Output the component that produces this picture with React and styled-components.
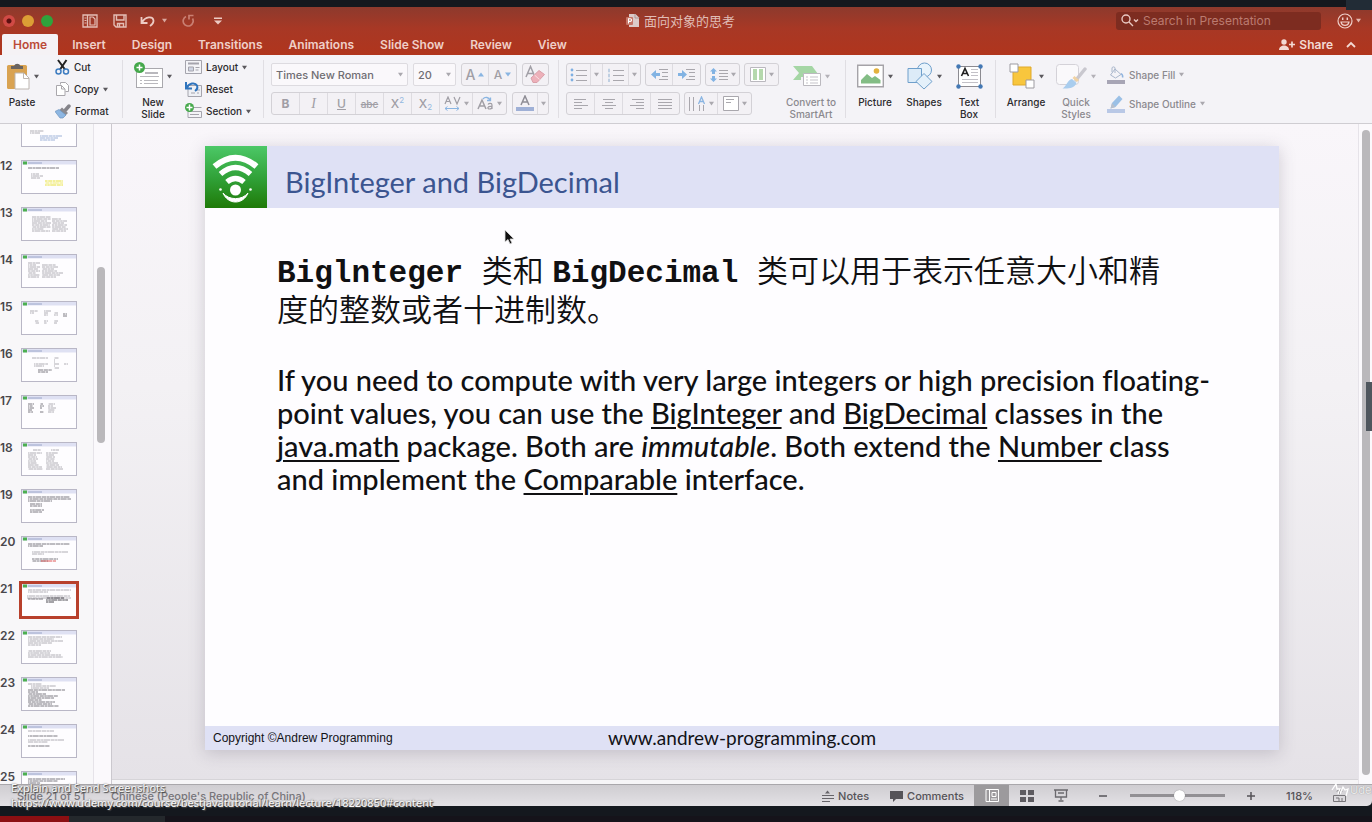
import React from "react";
import styled, { createGlobalStyle } from "styled-components";

const UI = `Inter, "Noto Sans CJK SC", "Liberation Sans", sans-serif`;
const SLIDE = `Lato, "Noto Sans CJK SC", sans-serif`;

const Global = createGlobalStyle`
  * { box-sizing: border-box; }
  html, body, #root { height: 100%; }
  body { margin: 0; background: #14181e; font-family: ${UI}; overflow: hidden; }
  button, input, select { font-family: inherit; margin: 0; }
  svg { display: block; flex: none; }
`;

/* ---------- frame ---------- */
const Screen = styled.div`
  position: relative;
  display: grid;
  grid-template-rows: 7px minmax(0, 1fr) 16px;
  height: 100%;
`;
const AppWindow = styled.div`
  grid-row: 2;
  display: flex;
  flex-direction: column;
  min-height: 0;
  border-radius: 0 0 5px 0;
  overflow: hidden;
`;
const PlayerTrack = styled.div`
  grid-row: 3;
  align-self: end;
  display: flex;
  height: 6px;
  background: #15131a;
`;
const Played = styled.div`
  width: 5%;
  background: #8c0f12;
`;
const Buffered = styled.div`
  width: 7%;
  background: #24282c;
`;

/* ---------- header ---------- */
const Header = styled.header`
  flex: none;
  background: linear-gradient(#8d3a2d, #a83825 45%, #b0351d);
  color: #f3d9d3;
`;
const TitleBar = styled.div`
  display: grid;
  grid-template-columns: 1fr auto 1fr;
  align-items: center;
  height: 27px;
  padding-right: 11px;
`;
const QuickAccess = styled.div`
  display: flex;
  align-items: center;
  padding-left: 3px;
`;
const Light = styled.button`
  width: 12px;
  height: 12px;
  margin-right: 7px;
  padding: 0;
  border: 0;
  border-radius: 50%;
  background: ${(p) => (p.$dot ? `radial-gradient(circle, #5c0f10 2px, ${p.$color} 3px)` : p.$color)};
`;
const QuickIcons = styled.div`
  display: flex;
  align-items: center;
  margin-left: 15px;
`;
const Plain = styled.button`
  display: flex;
  align-items: center;
  justify-content: center;
  gap: ${(p) => p.$gap || 0}px;
  width: ${(p) => (p.$w ? `${p.$w}px` : "auto")};
  padding: 0;
  border: 0;
  background: none;
  color: inherit;
  font-size: 12px;
  font-weight: ${(p) => p.$weight || 400};
`;
const DocTitle = styled.h1`
  display: flex;
  align-items: center;
  gap: 4px;
  margin: 0;
  font-size: 13px;
  line-height: 16px;
  font-weight: 400;
  color: #e0bdb6;
`;
const TitleRight = styled.div`
  display: flex;
  align-items: center;
  justify-content: flex-end;
  gap: 16px;
`;
const Search = styled.label`
  display: flex;
  align-items: center;
  gap: 4px;
  width: 205px;
  height: 18px;
  padding-left: 5px;
  border-radius: 3px;
  background: #7d2c20;
`;
const SearchInput = styled.input`
  flex: 1;
  min-width: 0;
  padding: 0;
  border: 0;
  outline: 0;
  background: none;
  color: #c78c81;
  font-size: 12px;
  &::placeholder { color: #bb7b70; opacity: 1; }
`;
const TabRow = styled.nav`
  display: flex;
  align-items: stretch;
  height: 21px;
  padding-left: 2px;
`;
const Tab = styled.button`
  padding: 0 ${(p) => (p.$active ? 11 : 13)}px;
  margin-right: ${(p) => (p.$active ? 1 : 0)}px;
  border: 0;
  border-radius: 2px 2px 0 0;
  background: ${(p) => (p.$active ? "#f5f2f5" : "none")};
  color: ${(p) => (p.$active ? "#bb4a37" : "#f0cfc8")};
  font-size: 12px;
  line-height: 19px;
  font-weight: 600;
`;
const TabEnd = styled.div`
  display: flex;
  gap: 13px;
  margin-left: auto;
  padding-right: 16px;
  color: #f3d9d3;
`;

/* ---------- ribbon ---------- */
const Ribbon = styled.div`
  flex: none;
  display: flex;
  height: 69px;
  background: #f4f3f7;
  border-bottom: 1px solid #cfcdd2;
`;
const Group = styled.section`
  position: relative;
  display: flex;
  flex: none;
  width: ${(p) => (p.$w ? `${p.$w}px` : "auto")};
  padding-left: ${(p) => p.$pad || 0}px;
  &:not(:last-child)::after {
    content: "";
    position: absolute;
    right: 0;
    top: 5px;
    bottom: 5px;
    width: 1px;
    background: #e0dee3;
  }
`;
const Big = styled.button`
  display: flex;
  flex-direction: column;
  align-items: center;
  flex: none;
  width: ${(p) => p.$w}px;
  padding: 6px 0 0;
  border: 0;
  background: none;
  color: ${(p) => (p.$off ? "#8b898e" : "#2b2a2d")};
  font-size: 10px;
  line-height: 12px;
  font-weight: 500;
`;
const BigTop = styled.span`
  display: flex;
  align-items: center;
  gap: 4px;
  height: 30px;
  margin-bottom: 5px;
`;
const SmallList = styled.div`
  display: flex;
  flex-direction: column;
  padding: 1px 0 0 ${(p) => p.$pad}px;
`;
const Small = styled.button`
  display: flex;
  align-items: center;
  gap: 4px;
  flex: none;
  height: ${(p) => (p.$off ? 23 : 22)}px;
  padding: 0;
  border: 0;
  background: none;
  color: ${(p) => (p.$off ? "#8b898e" : "#2b2a2d")};
  font-size: 10px;
  line-height: 12px;
  font-weight: 500;
  white-space: nowrap;
`;
const Rows = styled.div`
  display: flex;
  flex-direction: column;
  gap: 6px;
  padding: 8px 0 0 ${(p) => p.$pad || 0}px;
`;
const Row = styled.div`
  display: flex;
  gap: ${(p) => p.$gap || 5}px;
`;
const Seg = styled.div`
  display: flex;
  height: 23px;
  border: 1px solid #d3d1d6;
  border-radius: 3px;
  background: #f3f1f5;
`;
const SegBtn = styled.button`
  display: flex;
  align-items: center;
  justify-content: center;
  gap: 3px;
  width: ${(p) => p.$w || 28}px;
  padding: 0;
  border: 0;
  border-right: 1px solid #dddbe0;
  background: none;
  color: #a09ea5;
  font-size: 12px;
  line-height: 16px;
  &:last-child { border-right: 0; }
`;
const Glyph = styled.span`
  font-family: ${(p) => (p.$serif ? `"Liberation Serif", serif` : "inherit")};
  font-size: ${(p) => p.$size || 12}px;
  font-weight: ${(p) => p.$weight || 500};
  font-style: ${(p) => (p.$italic ? "italic" : "normal")};
  text-decoration: ${(p) => p.$deco || "none"};
`;
const Script = styled.span`
  font-size: 8px;
  line-height: 8px;
  color: #94b8e0;
  align-self: ${(p) => p.$pos};
  padding: 3px 0;
  margin-left: -3px;
`;
const Field = styled.label`
  display: flex;
  align-items: center;
  width: ${(p) => p.$w}px;
  height: 23px;
  padding-right: 4px;
  border: 1px solid #dddbe0;
  border-radius: 2px;
  background: #faf8fb;
`;
const Picker = styled.select`
  appearance: none;
  flex: 1;
  min-width: 0;
  height: 21px;
  padding: 0 0 0 4px;
  border: 0;
  background: none;
  color: #6f6d73;
  font-size: 11px;
  font-weight: 500;
`;

/* ---------- workspace ---------- */
const Work = styled.div`
  flex: 1;
  display: flex;
  min-height: 0;
  border-bottom: 1px solid #a9a7ab;
`;
const Sidebar = styled.aside`
  flex: none;
  display: flex;
  width: 112px;
  background: #f8f7f9;
  border-right: 1px solid #cbc8ce;
  overflow: hidden;
`;
const ThumbList = styled.ol`
  flex: 1;
  display: flex;
  flex-direction: column;
  gap: 13px;
  margin: -11px 0 0;
  padding: 0;
  list-style: none;
`;
const ThumbItem = styled.li`
  display: flex;
  flex: none;
  height: 34px;
  color: #49474c;
  font-size: 12px;
  line-height: 12px;
  font-weight: 600;
`;
const ThumbNo = styled.span`
  width: 21px;
`;
const Thumb = styled.button`
  width: 56px;
  height: 34px;
  padding: 0;
  border: 1px solid #b9b7c6;
  background: #fefdff;
  outline: ${(p) => (p.$on ? "3px solid #b8402c" : "0")};
  outline-offset: -1px;
  overflow: hidden;
`;
const ScrollTrack = styled.div`
  flex: none;
  width: ${(p) => p.$w}px;
  padding: ${(p) => p.$top} 3px ${(p) => p.$bottom} 3px;
  border-left: 1px solid #e6e3e9;
  background: #fbf9fc;
`;
const ScrollThumb = styled.div`
  width: 8px;
  height: ${(p) => p.$h};
  border-radius: 4px;
  background: #bab8bb;
`;
const Canvas = styled.main`
  flex: 1;
  display: flex;
  min-width: 0;
  padding: 22px 79px 30px 93px;
  background: linear-gradient(#f9f6fa, #f3f1f4 40%, #e5e2e7);
  border-bottom: 4px solid #f6f5f7;
  box-shadow: inset 0 -1px #d6d4d8;
`;
const Slide = styled.article`
  position: relative;
  flex: 1;
  display: flex;
  flex-direction: column;
  min-width: 0;
  background: #fefdff;
  box-shadow: 0 3px 16px rgba(70, 60, 80, 0.22);
  font-family: ${SLIDE};
  font-variant-ligatures: none;
`;
const SlideHead = styled.div`
  display: flex;
  align-items: center;
  gap: 18px;
  height: 62px;
  background: #dfe1f5;
`;
const SlideTitle = styled.h2`
  margin: 0;
  padding-top: 10px;
  color: #3b5590;
  font-size: 29px;
  line-height: 36px;
  font-weight: 400;
  white-space: nowrap;
`;
const SlideBody = styled.div`
  flex: 1;
  padding: 44px 0 0 72px;
  color: #101012;
  white-space: nowrap;
`;
const Chinese = styled.p`
  margin: 0 0 33px;
  font-family: "Liberation Sans", "Noto Sans CJK SC", sans-serif;
  font-size: 31px;
  line-height: 39px;
  font-weight: 350;
`;
const Code = styled.b`
  font-family: "Liberation Mono", monospace;
  line-height: 1;
  font-weight: 700;
  white-space: pre;
`;
const English = styled.p`
  margin: 0;
  font-size: 29px;
  font-weight: 500;
  line-height: 33px;
  u { text-decoration-thickness: 2px; text-underline-offset: 3px; }
`;
const SlideFoot = styled.footer`
  display: grid;
  grid-template-columns: 395px 1fr;
  align-items: center;
  height: 24px;
  padding-left: 8px;
  background: #dfe1f5;
  color: #121217;
`;
const Copyright = styled.span`
  font-family: "Liberation Sans", sans-serif;
  font-size: 12px;
`;
const Site = styled.span`
  font-size: 19px;
  line-height: 22px;
`;
const Cursor = styled.svg`
  position: absolute;
  left: 299px;
  top: 83px;
`;

/* ---------- status bar ---------- */
const Status = styled.footer`
  flex: none;
  display: flex;
  align-items: center;
  height: 21px;
  padding-left: 17px;
  background: linear-gradient(#cfcdd1, #e3e1e5);
  color: #555358;
  font-size: 11px;
  font-weight: 500;
`;
const StatusText = styled.span`
  width: ${(p) => (p.$w ? `${p.$w}px` : "auto")};
  white-space: nowrap;
  color: #77757a;
`;
const StatusRight = styled.div`
  display: flex;
  align-items: center;
  height: 100%;
  margin-left: auto;
  padding-right: 26px;
`;
const StatusBtn = styled.button`
  display: flex;
  align-items: center;
  justify-content: ${(p) => (p.$w ? "center" : "flex-start")};
  gap: 4px;
  width: ${(p) => (p.$w ? `${p.$w}px` : "auto")};
  height: 100%;
  margin-right: ${(p) => p.$after || 0}px;
  padding: 0;
  border: 0;
  background: ${(p) => (p.$on ? "#9c9a9d" : "none")};
  color: inherit;
  font-size: 11px;
  font-weight: 500;
`;
const Zoom = styled.input`
  appearance: none;
  width: 95px;
  height: 12px;
  margin: 0 20px 0 18px;
  background: linear-gradient(#929094, #929094) center / 100% 3px no-repeat;
  &::-webkit-slider-thumb {
    appearance: none;
    width: 11px;
    height: 11px;
    border-radius: 50%;
    background: #fff;
    box-shadow: 0 0 1px #777;
  }
`;

/* ---------- overlays ---------- */
const Hint = styled.div`
  position: absolute;
  left: 11px;
  bottom: 12px;
  color: #f8f8f8;
  font-family: "Noto Sans", sans-serif;
  font-size: 11px;
  line-height: 15px;
  text-shadow: 1px 1px 1px #444, 0 0 2px #666;
  white-space: nowrap;
`;
const HintLink = styled.a`
  display: block;
  color: inherit;
  text-decoration: none;
`;
const SideHandle = styled.div`
  position: absolute;
  right: 0;
  top: 382px;
  width: 6px;
  height: 49px;
  background: #4f565d;
`;
const TopHandle = styled.div`
  position: absolute;
  right: 0;
  top: 0;
  width: 26px;
  height: 10px;
  background: #222c36;
`;
const Watermark = styled.div`
  position: absolute;
  right: 0;
  bottom: 24px;
  display: flex;
  align-items: center;
  width: 42px;
  overflow: hidden;
  color: rgba(250, 250, 250, 0.85);
  font-size: 11px;
  line-height: 16px;
  text-shadow: 0 0 1px #888;
`;

/* ---------- drawings ---------- */
const Caret = ({ c = "#5a585d", s = 5 }) => (
  <svg width={s} height={s} viewBox="0 0 6 6"><path d="M0 1h6L3 5.5z" fill={c} /></svg>
);
const Svg = ({ w, h, children, ...r }) => (
  <svg width={w} height={h} viewBox={`0 0 ${w} ${h}`} fill="none" {...r}>{children}</svg>
);
const SidebarIcon = () => (
  <Svg w={16} h={14} stroke="#e3bdb5"><path d="M1 1h14v12H1zM5.500 1v12" strokeWidth="1.300" /><path d="M2.500 4h2M2.500 6.500h2M2.500 9h2" /><path d="M8 3h3l2 2v6H8z" strokeWidth="1.200" /></Svg>
);
const SaveIcon = () => (
  <Svg w={14} h={14} stroke="#e3bdb5" strokeWidth="1.400"><path d="M1 1h12v12H3l-2-2z" /><path d="M3.500 1v5h7.500V1" /><path d="M4.500 13V9.500h6V13M6.500 10v3" /></Svg>
);
const UndoIcon = () => (
  <Svg w={15} h={12} stroke="#edcbc4" strokeWidth="1.800"><path d="M1.500 2v6h6M2 7.500C5.500 1 13 1 13.500 5.500c.2 2-1.500 4-3.500 5.500" /></Svg>
);
const RedoIcon = () => (
  <Svg w={13} h={13} stroke="#c97f72" strokeWidth="1.700"><path d="M4 2.500A5 5 0 1 0 10.500 4.500M7 5.500V1.500h4.500" /></Svg>
);
const CustomIcon = () => (
  <Svg w={8} h={8}><path d="M0 .5h8v1.400H0zM0 3.500h8L4 7.500z" fill="#edcbc4" /></Svg>
);
const DocIcon = () => (
  <Svg w={14} h={15}><path d="M3 1h6.500L13 4.500V14H3z" fill="#dccbc9" /><path d="M9 1v4h4" stroke="#a99" /><rect y="4" width="7" height="8" rx="1" fill="#c57466" /><path d="M2.500 10.500V5.700h1.700a1.300 1.300 0 0 1 0 2.700H2.500" stroke="#fff" strokeWidth="1.100" /></Svg>
);
const SearchIcon = () => (
  <Svg w={18} h={13} stroke="#e8c8c2" strokeWidth="1.400"><circle cx="5" cy="5" r="4" /><path d="M8 8l4 4M13 5.500l2 2 2-2" /></Svg>
);
const SmileIcon = () => (
  <Svg w={16} h={16} stroke="#efcfc9" strokeWidth="1.200"><circle cx="8" cy="8" r="7" /><path d="M4 9c1 4.500 7 4.500 8 0z" /><path d="M5.700 4.500v2.500M10.300 4.500v2.500" strokeWidth="1.500" /></Svg>
);
const ShareIcon = () => (
  <Svg w={16} h={12}><circle cx="5" cy="3" r="2.700" fill="#f3d9d3" /><path d="M0 11c0-6 10-6 10 0z" fill="#f3d9d3" /><path d="M13 2.500v6M10 5.500h6" stroke="#f3d9d3" strokeWidth="1.700" /></Svg>
);
const PasteIcon = () => (
  <Svg w={24} h={28}><rect x="1" y="3" width="20" height="24" rx="1.500" fill="#d9a352" /><path d="M5 7V4h3a3.500 3.500 0 0 1 6.500 0H17v3z" fill="#6a6461" /><path d="M9 11h9l5 5v11H9z" fill="#fff" stroke="#bdb6b0" /><path d="M17.500 11v5.500H23" stroke="#bdb6b0" /></Svg>
);
const CutIcon = () => (
  <Svg w={15} h={16}><path d="M3 1l7 9.500M11.500 1L5 10.500" stroke="#222" strokeWidth="2" /><circle cx="3.500" cy="12.500" r="2.500" stroke="#3d7cc0" strokeWidth="1.500" /><circle cx="11" cy="12.500" r="2.500" stroke="#3d7cc0" strokeWidth="1.500" /></Svg>
);
const CopyIcon = () => (
  <Svg w={15} h={16} stroke="#a9a7ac"><path d="M5.500 3.500V1.500h5l3 3v6h-3" fill="#fff" /><path d="M1.500 4.500h5l3.500 3.500v6.500H1.500z" fill="#fff" /><path d="M6.500 4.500V8H10" /></Svg>
);
const FormatIcon = () => (
  <Svg w={16} h={15}><path d="M14 2L10.500 6" stroke="#85848a" strokeWidth="3.500" strokeLinecap="round" /><path d="M7 3.500l6 5.500-2.500 2.500-6.500-5z" fill="#8b8a90" /><path d="M4 5.500L0 7.500l5 6.500h3l3-3z" fill="#8db6e2" stroke="#6d93bd" strokeWidth=".7" /></Svg>
);
const Plus = ({ r = 5.5 }) => (
  <g><circle cx={r} cy={r} r={r} fill="#45a84b" /><path d={`M${r} ${r - 3}v6M${r - 3} ${r}h6`} stroke="#fff" strokeWidth="1.500" /></g>
);
const NewSlideIcon = () => (
  <Svg w={29} h={28}><rect x="2.500" y="6.500" width="26" height="19" fill="#fff" stroke="#a9a8ad" /><path d="M11 11h13" stroke="#b9b8bd" strokeWidth="2" /><path d="M6 14.500h19M6 18.500h2M10 18.500h14M6 21.500h2M10 21.500h14" stroke="#b9b8bd" /><Plus /></Svg>
);
const LayoutIcon = () => (
  <Svg w={17} h={14} stroke="#a5a4ad"><path d="M.5.5h16v13H.5z" fill="#f4f4f8" /><path d="M3 3.500h11" strokeWidth="2" /><path d="M3.500 7h5v4h-5z" fill="#cfd4e3" /><path d="M10.500 7.500h4M10.500 10h3" /></Svg>
);
const ResetIcon = () => (
  <Svg w={17} h={16}><path d="M3 4.500h13.500v11H3z" fill="#eef0f5" stroke="#a5a4ad" /><path d="M6 12h4M12 9h3M12 12h2" stroke="#a5a4ad" /><path d="M1 1v6.500h6M1.500 7C4 2 10 1 12 4.500c1 2.500-.5 4.500-2 5.500" stroke="#2f74bd" strokeWidth="2" /></Svg>
);
const SectionIcon = () => (
  <Svg w={17} h={16}><path d="M9 4.500h7.500M3 8.500h13.500v6H3z" fill="#f4f4f8" stroke="#a5a4ad" /><path d="M5 11.500h9" stroke="#a5a4ad" /><Plus r={4.5} /></Svg>
);
const EraseIcon = () => (
  <Svg w={21} h={19}><path d="M1 12L5.500 1.500 10 12M2.500 8.500h6" stroke="#a19fa6" strokeWidth="1.500" /><path d="M6 13l8-7.500 5.500 4-7.500 8H8z" fill="#edb0b9" stroke="#d99fa9" /><path d="M9.500 10l5 4.500" stroke="#f9dfe3" /></Svg>
);
const Lines = ({ rows, w = 14, c = "#a9a7ad" }) => (
  <Svg w={w} h={14} stroke={c}>{rows.map(([a, b], i) => <path key={i} d={`M${a} ${2.5 + i * 3}H${b}`} />)}</Svg>
);
const BulletIcon = ({ n }) => (
  <Svg w={17} h={14}>
    {[2.5, 7.5, 12.5].map((y) => (
      <g key={y}>{n ? <path d={`M2 ${y - 1.7}v3.500`} stroke="#9db9d6" strokeWidth="1.200" /> : <circle cx="2" cy={y - 0.5} r="1.400" fill="#7fb0e2" />}<path d={`M6 ${y}h11`} stroke="#a9a7ad" /></g>
    ))}
  </Svg>
);
const IndentIcon = ({ flip }) => (
  <Svg w={17} h={13}><path d={flip ? "M0 5h4V2l5 4.500L4 11V8H0z" : "M9 5H5V2L0 6.500 5 11V8h4z"} fill="#82b3e3" /><path d="M8 1.500h9M11 4.500h6M11 8.500h6M8 11.500h9" stroke="#a9a7ad" /></Svg>
);
const SpacingIcon = () => (
  <Svg w={18} h={14}><path d="M3.500 0L7 3.500H5V6H2V3.500H0zM3.500 14L0 10.500h2V8h3v2.500h2z" fill="#82b3e3" /><path d="M9 2.500h9M9 5.500h9M9 8.500h9M9 11.500h9" stroke="#a9a7ad" /></Svg>
);
const ColumnsIcon = () => (
  <Svg w={16} h={15}><path d="M.5.5h15v14H.5z" fill="#fff" stroke="#bab8be" /><path d="M3 2h4v11H3zM9 2h4v11H9z" fill="#b5d8ad" /></Svg>
);
const DirectionIcon = () => (
  <Svg w={18} h={16}><path d="M1.500 1v14M5.500 1v14M11.500 9v6M15.500 9v6" stroke="#a9a7ad" /><path d="M10.500 8l3-7 3 7M11.500 5.500h4" stroke="#8ab5e2" strokeWidth="1.300" /></Svg>
);
const AlignTextIcon = () => (
  <Svg w={16} h={15} stroke="#a9a7ad"><path d="M.5.5h15v14H.5z" fill="#fff" /><path d="M3 3.500h8M3 6.500h5" /></Svg>
);
const SpacedIcon = () => (
  <Svg w={17} h={15}><path d="M1 8L4 1l3 7M2 5.500h4M10 1l3 7 3-7" stroke="#a09ea5" strokeWidth="1.200" /><path d="M1 12.500h14M3.500 10.500l-2.500 2 2.500 2M12.500 10.500l2.500 2-2.500 2" stroke="#8ab5e2" /></Svg>
);
const CaseIcon = () => (
  <Svg w={17} h={15}><path d="M1 13L5 4l4 9M2.500 10h5" stroke="#a09ea5" strokeWidth="1.500" /><path d="M11 8.500c1-1.500 4-1.500 4 .5v4M15 10.500c-5-.5-5 2.500-2.500 2.500 1.500 0 2.500-1 2.500-2" stroke="#a09ea5" strokeWidth="1.200" /><path d="M6 3c2-2.500 6-2 7 1.500M10 4.500h3.500V1.500" stroke="#8ab5e2" strokeWidth="1.300" /></Svg>
);
const FontColorIcon = () => (
  <Svg w={18} h={17}><path d="M5 10L9 1l4 9M6.500 7h5" stroke="#8f8d95" strokeWidth="1.500" /><path d="M0 12h18v4H0z" fill="#9fb0d6" /></Svg>
);
const SmartIcon = () => (
  <Svg w={28} h={24}><path d="M0 2h19l6 8-3 3H8v3H0l6-7z" fill="#a5d6a5" /><path d="M10.500 9.500h17v12h-17z" fill="#fff" stroke="#bbb9bf" /><path d="M13 13h2M17 13h8M13 16h2M17 16h8M13 19h2M17 19h8" stroke="#c5c3c9" /></Svg>
);
const PictureIcon = () => (
  <Svg w={27} h={26}><path d="M.7 2.200h25.600v21.600H.7z" fill="#fff" stroke="#a5a3a8" strokeWidth="1.400" /><path d="M4 20.500V17l6-6 5 4 3-2 5.500 4v3.500z" fill="#83bd85" /><circle cx="19.500" cy="8" r="2.800" fill="#e3b23e" /></Svg>
);
const ShapesIcon = () => (
  <Svg w={26} h={28} stroke="#6f9fcb"><circle cx="17.500" cy="8" r="7" fill="#e9f3fb" /><path d="M1 6.500h13.500v14H1z" fill="#dcebf8" /><path d="M17 11.500l8 8-8 7.500-8-7.500z" fill="#e4f0fa" /></Svg>
);
const TextBoxIcon = () => (
  <Svg w={27} h={25}><path d="M2.500 2.500h22v20h-22z" fill="#fff" stroke="#8c8b91" /><path d="M5.500 12L9 4.500l3.500 7.500M6.500 9.500h5" stroke="#222" strokeWidth="1.600" /><path d="M15 5.500h7M15 8.500h7M15 11.500h7M6 15.500h16M6 18.500h16" stroke="#c3c1c7" />{[[2.5, 2.5], [24.500, 2.500], [2.500, 22.500], [24.500, 22.500]].map(([x, y]) => <circle key={`${x}-${y}`} cx={x} cy={y} r="2.200" fill="#4478b4" />)}</Svg>
);
const ArrangeIcon = () => (
  <Svg w={26} h={26}><path d="M4 4h18v18H4z" fill="#f8c63d" stroke="#e0a92a" /><path d="M1 1h8v8H1zM17 17h8v8h-8z" fill="#fff" stroke="#9d9ba1" /></Svg>
);
const QuickIcon = () => (
  <Svg w={31} h={28}><rect x=".5" y="2.500" width="22" height="20" rx="3" fill="#faf9fb" stroke="#d4d2d8" /><path d="M29 7L20 18" stroke="#c9c8cf" strokeWidth="3.500" strokeLinecap="round" /><path d="M17.500 15l4.500 4" stroke="#f1d3a3" strokeWidth="3" /><path d="M16 17l4.500 4c-2 5-8 6-14 5.500 4-2 5-9 9.500-9.500z" fill="#a9cdee" /></Svg>
);
const FillIcon = () => (
  <Svg w={18} h={18}><path d="M8 3l6 5.500-5.500 3.500L3.500 9zM8 7V2c0-1.500-3-1.500-3 0v4" stroke="#a9b6cb" /><path d="M14 7.500c1.500 1 2 2.500 1.500 4" stroke="#8fb3de" strokeWidth="1.500" /><path d="M0 14h18v4H0z" fill="#a7a5b5" /></Svg>
);
const OutlineIcon = () => (
  <Svg w={18} h={18}><path d="M12 .5l3.500 3.500-7 8-5 1.500L5 8z" fill="#9bc0e6" /><path d="M5 8l3.500 4-5 1.500z" fill="#b8bfcb" /><path d="M0 14h18v4H0z" fill="#b9c8e6" /></Svg>
);
const Logo = () => (
  <svg width="62" height="62" viewBox="0 0 62 62" fill="none" stroke="#fff">
    <defs><linearGradient id="lg" x1="0" y1="0" x2="0" y2="1"><stop stopColor="#4cc867" /><stop offset=".55" stopColor="#2f9f35" /><stop offset="1" stopColor="#1f7a08" /></linearGradient></defs>
    <path d="M0 0h62v62H0z" fill="url(#lg)" stroke="none" />
    <path d="M9.500 20.500Q30.500 3 51.500 20.500" strokeWidth="6" />
    <path d="M15.500 28Q30.500 15 45.500 28" strokeWidth="5.500" />
    <path d="M22 36Q30.500 29 39 36" strokeWidth="5.500" />
    <circle cx="30.500" cy="44" r="5.500" fill="#fff" stroke="none" />
    <path d="M18 47c5 12 20 12 25 0-6 7.500-19 7.500-25 0z" fill="#fff" strokeWidth="1" />
    <circle cx="15.500" cy="43.500" r="1.300" fill="#fff" stroke="none" /><circle cx="45.500" cy="43.500" r="1.300" fill="#fff" stroke="none" />
  </svg>
);

/* each mark: [x, y, length, colour] inside a 54x32 miniature */
const G = "#b0aeb5";
const K = "#7d7b82";
const ruled = (x, y, lens, c = G, step = 2) => lens.map((l, i) => [x, y + i * step, l, c]);
const slides = [
  { n: "11", m: [...ruled(8, 17, [14, 10]), ...ruled(18, 22, [22, 18, 15], "#9db2d8")] },
  { n: "12", m: [...ruled(6, 7, [31], K), ...ruled(9, 13, [8, 12, 9]), [23, 20, 18, "#e8e23b"], [23, 22, 18, "#f0ea6a"], [23, 24, 18, "#e8e23b"]] },
  { n: "13", m: [...ruled(10, 9, [19, 19, 15, 19, 18, 19, 12, 18]), ...ruled(30, 11, [9, 15, 12, 15, 14, 16, 14])] },
  { n: "14", m: [...ruled(6, 8, [12, 8, 12, 10, 12, 8, 12, 11]), ...ruled(20, 10, [14, 16, 12, 15, 21, 18, 14])] },
  { n: "15", m: [...ruled(8, 9, [8, 4]), ...ruled(22, 9, [7, 4, 4]), ...ruled(32, 11, [4, 4]), ...ruled(41, 12, [4, 4], K), ...ruled(13, 19, [4, 4]), ...ruled(22, 19, [4, 3]), ...ruled(32, 19, [4, 3])] },
  { n: "16", m: [...ruled(10, 9, [16]), ...ruled(12, 15, [14, 10]), ...ruled(16, 21, [14, 10], K), ...ruled(32, 9, [5, 1, 1, 5, 1, 5]), ...ruled(42, 15, [4])] },
  { n: "17", m: [...ruled(6, 8, [6, 5, 6, 4, 5], K), ...ruled(18, 8, [3, 4, 2, 0, 4], K), ...ruled(26, 8, [7, 5, 8, 7, 6])] },
  { n: "18", m: [...ruled(11, 7, [8]), ...ruled(29, 7, [8]), ...ruled(6, 10, [14, 8, 9, 10, 8, 9, 11, 14, 15]), ...ruled(24, 10, [12, 8, 9, 9, 8, 12, 13, 16, 17])] },
  { n: "19", m: [...ruled(6, 7, [42, 43, 24], K), ...ruled(8, 14, [12, 12, 0, 14, 12], K)] },
  { n: "20", m: [...ruled(6, 7, [42, 15], K), ...ruled(10, 15, [36, 12]), ...ruled(10, 22, [26, 16], K), [19, 24, 15, "#df5858"]] },
  { n: "21", m: [...ruled(6, 6, [43, 20]), ...ruled(5, 12, [43, 44]), ...ruled(6, 15, [15], K), ...ruled(24, 14, [18, 22, 8], "#4d4b52")], on: true },
  { n: "22", m: [...ruled(6, 6, [34, 26, 35, 24, 13]), ...ruled(6, 20, [23, 22, 33, 35])] },
  { n: "23", m: [...ruled(6, 6, [14]), ...ruled(9, 8, [25, 18]), ...ruled(6, 12, [37, 10, 18, 30, 26, 14, 27, 24, 31], K)] },
  { n: "24", m: [...ruled(6, 6, [26]), ...ruled(6, 11, [30], K), ...ruled(6, 15, [36, 20]), ...ruled(6, 21, [22], K)] },
  { n: "25", m: [...ruled(6, 7, [37, 30, 12, 9], K)] },
];
const Miniature = ({ marks }) => (
  <Svg w={54} h={32}>
    <path d="M0 0h54v3.500H0z" fill="#dfe1f3" />
    <path d="M1 .5h4v3H1z" fill="#4caf50" />
    <path d="M6 2h14" stroke="#9aa5c8" />
    {marks.map(([x, y, l, c], i) => <path key={i} d={`M${x} ${y}h${l}`} stroke={c} strokeDasharray="4 .5 2.500 .4 6 .6" strokeDashoffset={i * 2.7} />)}
  </Svg>
);
const tabs = ["Home", "Insert", "Design", "Transitions", "Animations", "Slide Show", "Review", "View"];
const aligns = {
  Left: [[0, 12], [0, 8], [0, 14], [0, 8]],
  Center: [[1, 13], [3, 11], [0, 14], [3, 11]],
  Right: [[2, 14], [6, 14], [0, 14], [6, 14]],
  Justify: [[0, 14], [0, 14], [0, 14], [0, 14]],
};
const Faint = () => <Caret c="#aaa8ae" s={5} />;

function BigButton({ w, icon, off, caret = true, children }) {
  return (
    <Big $w={w} $off={off}>
      <BigTop>{icon}{caret && <Caret c={off ? "#b3b1b7" : "#5a585d"} />}</BigTop>
      {children}
    </Big>
  );
}

export default function App() {
  return (
    <Screen>
      <Global />
      <AppWindow>
        <Header>
          <TitleBar>
            <QuickAccess>
              <Light aria-label="Close" $color="#d04a45" $dot />
              <Light aria-label="Minimise" $color="#dc9e35" />
              <Light aria-label="Full screen" $color="#2fa33c" />
              <QuickIcons>
                <Plain aria-label="Panes" $w={29}><SidebarIcon /></Plain>
                <Plain aria-label="Save" $w={31}><SaveIcon /></Plain>
                <Plain aria-label="Undo" $w={37} $gap={7}><UndoIcon /><Caret c="#d9a79e" /></Plain>
                <Plain aria-label="Redo" $w={32}><RedoIcon /></Plain>
                <Plain aria-label="Customise" $w={27}><CustomIcon /></Plain>
              </QuickIcons>
            </QuickAccess>
            <DocTitle><DocIcon />面向对象的思考</DocTitle>
            <TitleRight>
              <Search><SearchIcon /><SearchInput aria-label="Search" placeholder="Search in Presentation" /></Search>
              <Plain aria-label="Feedback" $gap={3}><SmileIcon /><Caret c="#e4b8b0" /></Plain>
            </TitleRight>
          </TitleBar>
          <TabRow>
            {tabs.map((t, i) => <Tab key={t} $active={i === 0}>{t}</Tab>)}
            <TabEnd>
              <Plain $gap={4} $weight={600}><ShareIcon />Share</Plain>
              <Plain aria-label="Collapse ribbon"><Svg w={10} h={8}><path d="M1 6l4-4 4 4" stroke="#f3d9d3" strokeWidth="1.800" /></Svg></Plain>
            </TabEnd>
          </TabRow>
        </Header>

        <Ribbon>
          <Group $w={123}>
            <BigButton w={44} icon={<PasteIcon />}>Paste</BigButton>
            <SmallList $pad={11}>
              <Small><CutIcon />Cut</Small>
              <Small><CopyIcon />Copy <Caret /></Small>
              <Small><FormatIcon />Format</Small>
            </SmallList>
          </Group>
          <Group $w={141} $pad={7}>
            <BigButton w={46} icon={<NewSlideIcon />}>New<br />Slide</BigButton>
            <SmallList $pad={9}>
              <Small><LayoutIcon />Layout <Caret /></Small>
              <Small><ResetIcon />Reset</Small>
              <Small><SectionIcon />Section <Caret /></Small>
            </SmallList>
          </Group>
          <Group $w={295} $pad={7}>
            <Rows>
              <Row>
                <Field $w={137}><Picker aria-label="Font"><option>Times New Roman</option></Picker><Faint /></Field>
                <Field $w={43}><Picker aria-label="Font size"><option>20</option></Picker><Faint /></Field>
                <Seg>
                  <SegBtn $w={27} aria-label="Grow font"><Glyph $size={14}>A</Glyph><Svg w={6} h={5}><path d="M0 4.500h6L3 .5z" fill="#8ab5e2" /></Svg></SegBtn>
                  <SegBtn $w={27} aria-label="Shrink font"><Glyph>A</Glyph><Svg w={6} h={5}><path d="M0 .5h6L3 4.500z" fill="#8ab5e2" /></Svg></SegBtn>
                </Seg>
                <Seg><SegBtn $w={25} aria-label="Clear formatting"><EraseIcon /></SegBtn></Seg>
              </Row>
              <Row>
                <Seg>
                  <SegBtn><Glyph $weight={700}>B</Glyph></SegBtn>
                  <SegBtn><Glyph $serif $italic $size={14}>I</Glyph></SegBtn>
                  <SegBtn><Glyph $deco="underline">U</Glyph></SegBtn>
                  <SegBtn><Glyph $size={10} $deco="line-through">abc</Glyph></SegBtn>
                  <SegBtn><Glyph>X</Glyph><Script $pos="flex-start">2</Script></SegBtn>
                  <SegBtn><Glyph>X</Glyph><Script $pos="flex-end">2</Script></SegBtn>
                  <SegBtn $w={33} aria-label="Character spacing"><SpacedIcon /><Faint /></SegBtn>
                  <SegBtn $w={33} aria-label="Change case"><CaseIcon /><Faint /></SegBtn>
                </Seg>
                <Seg>
                  <SegBtn $w={25} aria-label="Font colour"><FontColorIcon /></SegBtn>
                  <SegBtn $w={10} aria-label="Font colour menu"><Faint /></SegBtn>
                </Seg>
              </Row>
            </Rows>
          </Group>
          <Group $w={287} $pad={7}>
            <Rows>
              <Row $gap={4}>
                <Seg>
                  <SegBtn $w={24} aria-label="Bullets"><BulletIcon /></SegBtn>
                  <SegBtn $w={12} aria-label="Bullets menu"><Faint /></SegBtn>
                  <SegBtn $w={26} aria-label="Numbering"><BulletIcon n /></SegBtn>
                  <SegBtn $w={11} aria-label="Numbering menu"><Faint /></SegBtn>
                </Seg>
                <Seg>
                  <SegBtn $w={27} aria-label="Decrease indent"><IndentIcon /></SegBtn>
                  <SegBtn $w={27} aria-label="Increase indent"><IndentIcon flip /></SegBtn>
                </Seg>
                <Seg><SegBtn $w={33} aria-label="Line spacing"><SpacingIcon /><Faint /></SegBtn></Seg>
                <Seg><SegBtn $w={33} aria-label="Columns"><ColumnsIcon /><Faint /></SegBtn></Seg>
              </Row>
              <Row $gap={4}>
                <Seg>{Object.entries(aligns).map(([k, r]) => <SegBtn key={k} aria-label={k}><Lines rows={r} /></SegBtn>)}</Seg>
                <Seg>
                  <SegBtn $w={33} aria-label="Text direction"><DirectionIcon /><Faint /></SegBtn>
                  <SegBtn $w={33} aria-label="Align text"><AlignTextIcon /><Faint /></SegBtn>
                </Seg>
              </Row>
            </Rows>
            <BigButton w={64} off icon={<SmartIcon />}>Convert to<br />SmartArt</BigButton>
          </Group>
          <Group $w={150} $pad={5}>
            <BigButton w={48} icon={<PictureIcon />}>Picture</BigButton>
            <BigButton w={50} icon={<ShapesIcon />}>Shapes</BigButton>
            <BigButton w={40} caret={false} icon={<TextBoxIcon />}>Text<br />Box</BigButton>
          </Group>
          <Group $pad={4}>
            <BigButton w={52} icon={<ArrangeIcon />}>Arrange</BigButton>
            <BigButton w={48} off icon={<QuickIcon />}>Quick<br />Styles</BigButton>
            <Rows $pad={7}>
              <Small $off><FillIcon />Shape Fill <Faint /></Small>
              <Small $off><OutlineIcon />Shape Outline <Faint /></Small>
            </Rows>
          </Group>
        </Ribbon>

        <Work>
          <Sidebar>
            <ThumbList>
              {slides.map((s) => (
                <ThumbItem key={s.n}>
                  <ThumbNo>{s.n}</ThumbNo>
                  <Thumb $on={s.on} aria-label={`Slide ${s.n}`}><Miniature marks={s.m} /></Thumb>
                </ThumbItem>
              ))}
            </ThumbList>
            <ScrollTrack $w={18} $top="143px" $bottom="0"><ScrollThumb $h="176px" /></ScrollTrack>
          </Sidebar>
          <Canvas>
            <Slide>
              <SlideHead><Logo /><SlideTitle>BigInteger and BigDecimal</SlideTitle></SlideHead>
              <SlideBody>
                <Chinese><Code>Biglnteger </Code>类和 <Code>BigDecimal </Code>类可以用于表示任意大小和精<br />度的整数或者十进制数。</Chinese>
                <English>
                  If you need to compute with very large integers or high precision floating-<br />
                  point values, you can use the <u>BigInteger</u> and <u>BigDecimal</u> classes in the<br />
                  <u>java.math</u> package. Both are <i>immutable</i>. Both extend the <u>Number</u> class<br />
                  and implement the <u>Comparable</u> interface.
                </English>
              </SlideBody>
              <SlideFoot><Copyright>Copyright ©Andrew Programming</Copyright><Site>www.andrew-programming.com</Site></SlideFoot>
              <Cursor width="11" height="16" viewBox="0 0 11 16"><path d="M1 1v12l3-2.500L6 15l2-1-2-4h4z" fill="#111" stroke="#ddd" strokeWidth=".8" /></Cursor>
            </Slide>
          </Canvas>
          <ScrollTrack $w={14} $top="6px" $bottom="9px"><ScrollThumb $h="100%" /></ScrollTrack>
        </Work>

        <Status>
          <StatusText $w={94}>Slide 21 of 51</StatusText>
          <StatusText>Chinese (People's Republic of China)</StatusText>
          <StatusRight>
            <StatusBtn $after={21}><Svg w={13} h={12} stroke="#666469"><path d="M4 3.500L6.500.5 9 3.500z" fill="#666469" stroke="none" /><path d="M1 5.500h12M1 8.500h12M1 11.500h8" /></Svg>Notes</StatusBtn>
            <StatusBtn $after={10}><Svg w={13} h={12}><path d="M0 1h13v8H6l-3 3V9H0z" fill="#555358" /></Svg>Comments</StatusBtn>
            <StatusBtn $w={35} $on aria-label="Normal view"><Svg w={14} h={13} stroke="#fff"><path d="M1 .5h12.500v12H1zM4.500 .5v12" /><path d="M7 3.500h4v4H7zM6 10h6" /></Svg></StatusBtn>
            <StatusBtn $w={35} aria-label="Slide sorter"><Svg w={14} h={12}><path d="M0 0h6v5H0zM8 0h6v5H8zM0 7h6v5H0zM8 7h6v5H8z" fill="#5d5b60" /></Svg></StatusBtn>
            <StatusBtn $w={33} $after={16} aria-label="Slide show"><Svg w={14} h={13} stroke="#6b696e"><path d="M0 1h14M1.500 1v7h11V1M4 4h6M7 8v3M4.500 12h5" strokeWidth="1.300" /></Svg></StatusBtn>
            <StatusBtn $w={19} aria-label="Zoom out"><Svg w={8} h={8}><path d="M0 4h8" stroke="#555358" strokeWidth="1.500" /></Svg></StatusBtn>
            <Zoom type="range" aria-label="Zoom" defaultValue="52" />
            <StatusBtn $w={12} $after={29} aria-label="Zoom in"><Svg w={8} h={8}><path d="M0 4h8M4 0v8" stroke="#555358" strokeWidth="1.500" /></Svg></StatusBtn>
            <StatusBtn $after={20}>118%</StatusBtn>
            <StatusBtn aria-label="Fit to window"><Svg w={13} h={13} stroke="#777579"><path d="M.5 6.500h12v6H.5zM3 9h3v3M9 9v3M6.500 0v5M4 2.500L6.500 0 9 2.500" /></Svg></StatusBtn>
          </StatusRight>
        </Status>
      </AppWindow>
      <PlayerTrack><Played /><Buffered /></PlayerTrack>
      <Hint>
        Explain and Send Screenshots
        <HintLink href="#content">https://www.udemy.com/course/bestjavatutorial/learn/lecture/18220850#content</HintLink>
      </Hint>
      <SideHandle />
      <TopHandle />
      <Watermark><Svg w={20} h={16} stroke="#fff" strokeWidth="1.300"><path d="M2 8l4-6 1 5h3l-2 5M10 12l3-7 2 3 3-1-2 7" /></Svg>Udemy</Watermark>
    </Screen>
  );
}
